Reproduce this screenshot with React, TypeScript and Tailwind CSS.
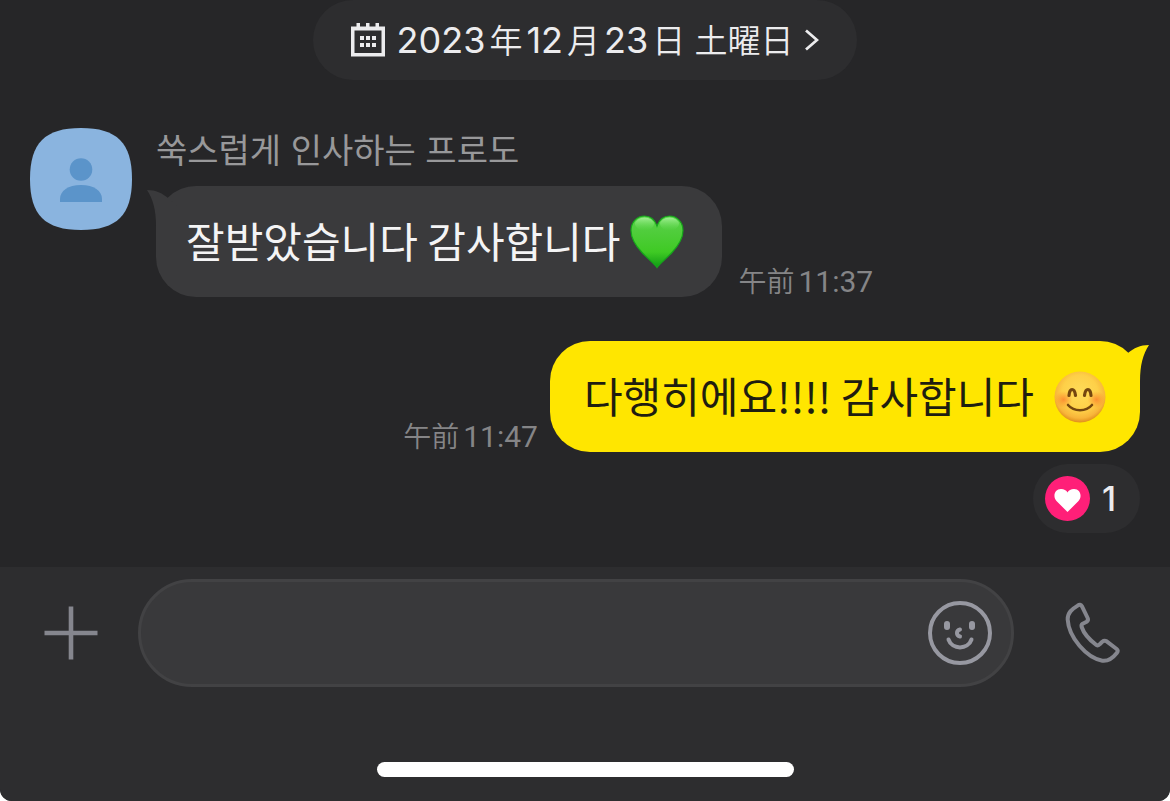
import type { ReactNode } from "react";

type Side = "left" | "right";

function CalendarIcon() {
  return (
    <svg viewBox="0 0 34 34" className="h-[34px] w-[34px] shrink-0" fill="currentColor" aria-hidden="true">
      <path fillRule="evenodd" d="M0 3.500H34V33.500H0ZM3.500 7.500V30H30.500V7.500Z" />
      <path d="M5.500 0h3.500v4H5.500zM15 0h3.500v4H15zM24.500 0h3.500v4h-3.500z" />
      <path d="M9 13h4v4H9zM15 13h4v4h-4zM21 13h4v4h-4zM9 20h4v4H9zM15 20h4v4h-4zM21 20h4v4h-4z" />
    </svg>
  );
}

function ChevronIcon() {
  return (
    <svg viewBox="0 0 14 22" className="h-[22px] w-[14px] shrink-0" fill="none" stroke="currentColor" strokeWidth="2.800" aria-hidden="true">
      <path d="M1 1.500L12 11L1 20.500" />
    </svg>
  );
}

function Avatar() {
  return (
    <svg viewBox="0 0 102 102" className="h-[102px] w-[102px] shrink-0" role="img" aria-label="프로필">
      <path
        d="M51 0C87 0 102 15 102 51C102 87 87 102 51 102C15 102 0 87 0 51C0 15 15 0 51 0Z"
        fill="#8ab4df"
      />
      <circle cx="51" cy="41.500" r="11.300" fill="#5b94ca" />
      <path d="M30 74V71C30 63 38 57 51 57C64 57 72 63 72 71V74Z" fill="#5b94ca" />
    </svg>
  );
}

function GreenHeart() {
  return (
    <svg viewBox="0 0 54 54" className="h-[54px] w-[54px] shrink-0" role="img" aria-label="💚">
      <defs>
        <linearGradient id="heartFill" x1="0" y1="0" x2="0" y2="1">
          <stop offset="0" stopColor="#58d64a" />
          <stop offset="0.3" stopColor="#50cd3c" />
          <stop offset="0.7" stopColor="#3fca24" />
          <stop offset="1" stopColor="#0f9a14" />
        </linearGradient>
        <linearGradient id="heartShine" x1="0" y1="0" x2="0" y2="1">
          <stop offset="0" stopColor="#b4f5a6" stopOpacity="0.8" />
          <stop offset="1" stopColor="#6fdc5e" stopOpacity="0" />
        </linearGradient>
      </defs>
      <path
        d="M27 52.500C25 49 18 44 12 37.500C5 30 1 23 1 15.500C1 7 7 1 14.500 1C20.500 1 25 5 27 11C29 5 33.500 1 39.500 1C47 1 53 7 53 15.500C53 23 49 30 42 37.500C36 44 29 49 27 52.500Z"
        fill="url(#heartFill)"
        stroke="#16a51b"
        strokeWidth="1.200"
      />
      <ellipse cx="14.500" cy="9" rx="9.500" ry="6.500" fill="url(#heartShine)" />
      <ellipse cx="39.500" cy="9" rx="9.500" ry="6.500" fill="url(#heartShine)" />
    </svg>
  );
}

function BlushFace() {
  return (
    <svg viewBox="0 0 52 52" className="h-[52px] w-[52px] shrink-0" role="img" aria-label="😊">
      <defs>
        <radialGradient id="faceFill" cx="0.5" cy="0.42" r="0.58">
          <stop offset="0" stopColor="#ffdc5a" />
          <stop offset="0.6" stopColor="#fed048" />
          <stop offset="0.85" stopColor="#f8b53a" />
          <stop offset="1" stopColor="#e08e1c" />
        </radialGradient>
        <radialGradient id="blush">
          <stop offset="0" stopColor="#fb7a2c" stopOpacity="0.75" />
          <stop offset="1" stopColor="#fb8a2c" stopOpacity="0" />
        </radialGradient>
      </defs>
      <circle cx="26" cy="26" r="25.500" fill="url(#faceFill)" />
      <ellipse cx="9.500" cy="28.500" rx="9" ry="8.500" fill="url(#blush)" />
      <ellipse cx="42.500" cy="28.500" rx="9" ry="8.500" fill="url(#blush)" />
      <g fill="none" stroke="#75470f" strokeLinecap="round">
        <path strokeWidth="3.200" d="M15 24.500C15.500 16.500 20.500 16.500 21.500 24.500" />
        <path strokeWidth="3.200" d="M30.500 24.500C31.500 16.500 36.500 16.500 37 24.500" />
        <path strokeWidth="2.600" d="M14 34C20 41 32 41 38 34" />
      </g>
    </svg>
  );
}

function ReactionHeart() {
  return (
    <svg viewBox="0 0 45 45" className="h-[45px] w-[45px] shrink-0" aria-hidden="true">
      <circle cx="22.500" cy="22.500" r="22.500" fill="#ff1f78" />
      <path
        d="M22.500 36L11.500 25C7.500 20.500 9.500 13 16 13C19 13 21.500 14.500 22.500 16.500C23.500 14.500 26 13 29 13C35.500 13 37.500 20.500 33.500 25Z"
        fill="#fff"
      />
    </svg>
  );
}

function PlusIcon() {
  return (
    <svg viewBox="0 0 54 54" className="h-[54px] w-[54px]" stroke="currentColor" strokeWidth="4.600" aria-hidden="true">
      <path d="M27 0.500V53.500M0.500 27H53.500" />
    </svg>
  );
}

function SmileIcon() {
  return (
    <svg viewBox="0 0 64 64" className="h-[64px] w-[64px]" fill="none" stroke="currentColor" strokeWidth="4" strokeLinecap="round" aria-hidden="true">
      <circle cx="32" cy="32" r="30" />
      <path d="M20.500 38.500C24 49 40 49 43.500 38.500" />
      <path d="M32 28.500C28 29.500 28 34.500 32 35.500" />
      <rect x="16" y="20" width="6" height="9" rx="3" fill="currentColor" stroke="none" />
      <rect x="41" y="20" width="6" height="9" rx="3" fill="currentColor" stroke="none" />
    </svg>
  );
}

function PhoneIcon() {
  return (
    <svg viewBox="486 120 180 198" className="h-[66px] w-[60px]" fill="none" stroke="currentColor" strokeWidth="12" strokeLinejoin="round" aria-hidden="true">
      <path d="M533 137Q541 131 546 139L563 174Q566 180 560 185L548 191Q543 194 545 201C552 222 572 242 589 255Q595 258 600 252L607 245Q613 240 620 244L650 267Q656 272 651 278C636 297 622 304 607 302C560 294 506 232 503 178C503 158 515 148 533 137Z" />
    </svg>
  );
}

function Tail({ side }: { side: Side }) {
  const shape = "M0 4C9 4 15 7 21 12L30 20V40H9C9 24 6 13 0 4Z";
  return side === "left" ? (
    <svg viewBox="0 0 30 40" className="absolute top-0 -left-[9px] h-[40px] w-[30px]" fill="#3a3a3c" aria-hidden="true">
      <path d={shape} />
    </svg>
  ) : (
    <svg viewBox="0 0 30 40" className="absolute top-0 -right-[9px] h-[40px] w-[30px]" fill="#ffe600" aria-hidden="true">
      <path d={shape} transform="translate(30 0) scale(-1 1)" />
    </svg>
  );
}

function Time({ value }: { value: string }) {
  return (
    <time
      lang="ja"
      className="flex shrink-0 items-baseline gap-1 font-['Roboto','Noto_Sans_CJK_JP',sans-serif] text-[30px] leading-7 text-[#858587]"
    >
      <span className="text-[28px] font-[350]">午前</span>
      <span>{value}</span>
    </time>
  );
}

function Bubble({ side, children }: { side: Side; children: ReactNode }) {
  return (
    <div
      className={
        side === "left"
          ? "relative flex h-[111px] items-center gap-[10px] rounded-[40px] bg-[#3a3a3c] pr-[38px] pl-[30px] font-['Noto_Sans_CJK_KR',sans-serif] text-[42px] text-[#f4f4f5]"
          : "relative flex h-[111px] items-center gap-5 rounded-[40px] bg-[#ffe600] pr-[34px] pl-[34px] font-['Noto_Sans_CJK_KR',sans-serif] text-[42px] text-[#1f1e10]"
      }
    >
      <Tail side={side} />
      {children}
    </div>
  );
}

export default function App() {
  return (
    <div className="bg-white">
      <div className="flex min-h-screen flex-col overflow-hidden rounded-b-xl bg-[#262628] font-['Inter','Noto_Sans_CJK_KR',sans-serif]">
        <header className="flex justify-center">
          <button
            type="button"
            lang="ja"
            className="flex h-20 items-center gap-3 rounded-full bg-[#2d2d2f] px-[38px] font-['Inter','Noto_Sans_CJK_JP',sans-serif] text-[36px] text-[#ececee]"
          >
            <CalendarIcon />
            <span className="flex items-baseline gap-1 whitespace-nowrap">
              <span>2023</span>
              <span className="text-[33px] font-[350]">年</span>
              <span>12</span>
              <span className="text-[33px] font-[350]">月</span>
              <span>23</span>
              <span className="text-[33px] font-[350]">日 土曜日</span>
            </span>
            <ChevronIcon />
          </button>
        </header>

        <main className="flex flex-1 flex-col px-[30px] pt-12">
          <article className="flex gap-6">
            <Avatar />
            <div className="flex flex-col gap-3">
              <h2 className="text-[34px] leading-[46px] font-normal text-[#98989a]">쑥스럽게 인사하는 프로도</h2>
              <div className="flex items-end gap-4">
                <Bubble side="left">
                  <span className="pb-1">잘받았습니다 감사합니다</span>
                  <GreenHeart />
                </Bubble>
                <Time value="11:37" />
              </div>
            </div>
          </article>

          <article className="mt-11 flex flex-col items-end gap-3">
            <div className="flex items-end gap-3">
              <Time value="11:47" />
              <Bubble side="right">
                <span className="pb-1">다행히에요!!!! 감사합니다</span>
                <BlushFace />
              </Bubble>
            </div>
            <button
              type="button"
              aria-label="하트 1"
              className="flex h-[69px] items-center gap-3 rounded-full bg-[#2d2d2f] pr-6 pl-3 text-[34px] font-medium text-[#ececee]"
            >
              <ReactionHeart />
              <span>1</span>
            </button>
          </article>
        </main>

        <footer className="flex flex-col items-center bg-[#2d2d2f] pt-3 pb-6">
          <form className="flex w-full items-center pr-[48px] pl-11 text-[#85868e]" onSubmit={(e) => e.preventDefault()}>
            <button type="button" aria-label="追加" className="mr-10">
              <PlusIcon />
            </button>
            <div className="flex h-[108px] min-w-0 flex-1 items-center rounded-full border-[3px] border-[#424244] bg-[#39393b] pr-[19px] pl-10">
              <input
                type="text"
                aria-label="メッセージ"
                className="h-full min-w-0 flex-1 bg-transparent text-[42px] text-[#f4f4f5] outline-none"
              />
              <button type="button" aria-label="スタンプ" className="text-[#9798a1]">
                <SmileIcon />
              </button>
            </div>
            <button type="button" aria-label="通話" className="ml-12">
              <PhoneIcon />
            </button>
          </form>
          <div className="mt-[75px] h-[15px] w-[417px] rounded-full bg-white" />
        </footer>
      </div>
    </div>
  );
}
